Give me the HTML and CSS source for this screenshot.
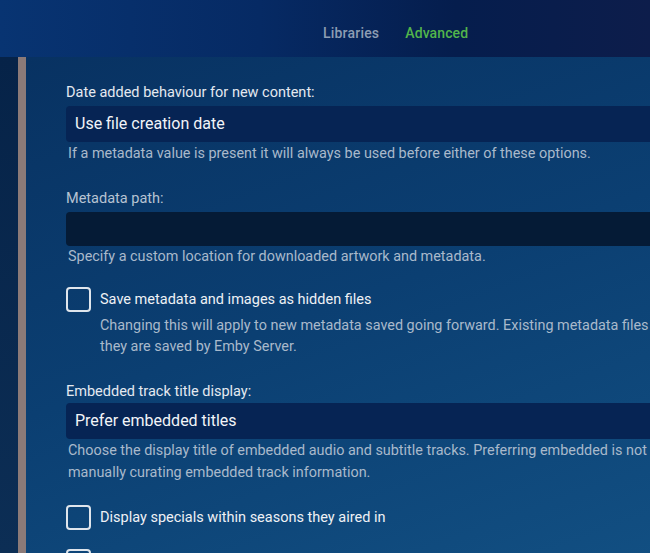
FILE: index.html
```html
<!DOCTYPE html>
<html lang="en">
<head>
    <meta charset="UTF-8">
    <meta name="viewport" content="width=device-width, initial-scale=1.0">
    <title>Library Settings</title>
    <link rel="stylesheet" href="styles.css">
</head>
<body>
    <!-- Top tabs -->
    <header class="header">
        <nav class="tabs">
            <a class="tab">Libraries</a>
            <a class="tab active">Advanced</a>
        </nav>
    </header>

    <div class="page">
        <div class="side"></div>
        <div class="rule"></div>

        <div class="content">
            <div class="field">
                <label class="field-label">Date added behaviour for new content:</label>
                <div class="select">Use file creation date</div>
                <div class="field-help">If a metadata value is present it will always be used before either of these options.</div>
            </div>

            <div class="field field-path">
                <label class="field-label muted">Metadata path:</label>
                <div class="input"></div>
                <div class="field-help flush">Specify a custom location for downloaded artwork and metadata.</div>
            </div>

            <div class="check check-long">
                <span class="box"></span>
                <div>
                    <div class="check-label">Save metadata and images as hidden files</div>
                    <div class="check-help">Changing this will apply to new metadata saved going forward. Existing metadata files will be updated the next time<br>they are saved by Emby Server.</div>
                </div>
            </div>

            <div class="field field-track">
                <label class="field-label">Embedded track title display:</label>
                <div class="select">Prefer embedded titles</div>
                <div class="field-help">Choose the display title of embedded audio and subtitle tracks. Preferring embedded is not recommended unless you are<br>manually curating embedded track information.</div>
            </div>

            <div class="check">
                <span class="box"></span>
                <div class="check-label">Display specials within seasons they aired in</div>
            </div>

            <div class="check">
                <span class="box"></span>
                <div class="check-label">Import missing episode information</div>
            </div>
        </div>
    </div>
</body>
</html>
```

FILE: styles.css
```css
html, body { margin: 0; height: 100%; overflow: hidden; }
body {
    font-family: Roboto, "Noto Sans", sans-serif;
    background: #0b3565;
    color: #e6ebf2;
}

/* Header */
.header {
    height: 57px;
    background: linear-gradient(90deg, #083472 0%, #062a64 40%, #051d4d 70%, #0d1d4b 100%);
    display: flex;
    align-items: center;
}
.tabs { display: flex; gap: 26px; margin-left: 323px; margin-top: 8px; }
.tab {
    font-size: 14px; font-weight: 500;
    color: #8d9db3;
}
.tab:first-child { letter-spacing: 0.2px; }
.tab.active { color: #52b54b; letter-spacing: 0.1px; }

/* Page body */
.page {
    display: flex;
    height: calc(100% - 57px);
}
.side {
    width: 18px; flex-shrink: 0;
    background: linear-gradient(180deg, #062348 0%, #0c2e55 100%);
}
.rule { width: 8px; flex-shrink: 0; background: #8b7a78; }
.content {
    flex: 1;
    padding: 27px 0 0 40px;
    background: linear-gradient(160deg, #083262 0%, #0b3f72 45%, #135285 100%);
    min-width: 800px;
}

/* Fields */
.field { margin-bottom: 25px; }
.field-path { margin-bottom: 19px; }
.field-track { margin-bottom: 21px; }
.field-label {
    display: block;
    font-size: 14.5px;
    line-height: 17px;
    color: #e4e9f0;
    margin-bottom: 5px;
}
.field-track .field-label { margin-bottom: 3px; }
.field-label.muted { color: #b7c3d2; }
.select {
    height: 36px; line-height: 36px;
    padding-left: 9px;
    background: #062454;
    border-radius: 4px 0 0 4px;
    font-size: 16px;
    color: #f2f4f8;
}
.input {
    height: 34px;
    background: #051b36;
    border-radius: 4px 0 0 4px;
}
.field-help {
    margin-top: 1px; margin-left: 2px;
    font-size: 14.4px; line-height: 22px;
    color: #a9b9cb;
    white-space: nowrap;
}
.field-help.flush { margin-top: 0; }

/* Checkboxes */
.check { display: flex; gap: 9px; margin-bottom: 19px; }
.check-long { margin-bottom: 26px; }
.box {
    width: 21px; height: 21px; flex-shrink: 0;
    border: 2px solid #dfe5ec;
    border-radius: 4px;
}
.check-label { font-size: 14.5px; line-height: 25px; color: #eef1f5; white-space: nowrap; }
.check-help {
    margin-top: 3px;
    font-size: 14.4px; line-height: 21px;
    color: #a9b9cb;
    white-space: nowrap;
}
```
